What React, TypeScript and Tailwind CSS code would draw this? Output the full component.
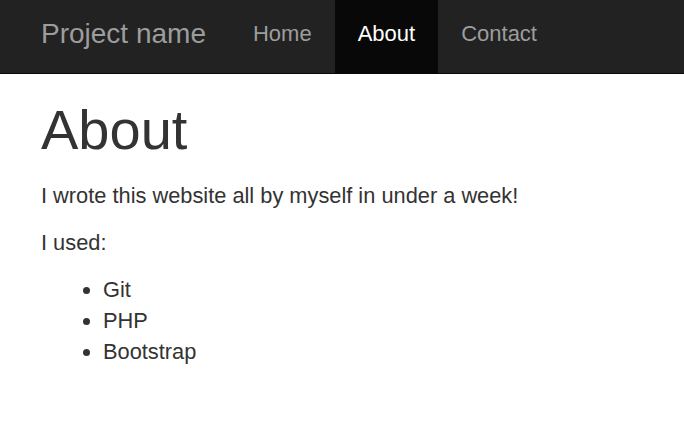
export default function App() {
  const tools = ["Git", "PHP", "Bootstrap"];
  return (
    <div className="min-h-screen bg-white text-[#333]" style={{ fontFamily: '"Liberation Sans", Arial, sans-serif' }}>
      <nav className="h-[74px] border-b border-[#080808] bg-[#222]">
        <div className="flex h-[73px] items-stretch pl-[20px]">
          <a className="flex items-center pl-[21px] pr-[24px] pb-[6px] text-[28px] text-[#9d9d9d]">Project name</a>
          <ul className="flex">
            <li className="flex items-center px-[23px] pb-[6px] text-[22px] text-[#9d9d9d]">Home</li>
            <li className="flex items-center bg-[#080808] px-[23px] pb-[6px] text-[22px] text-white">About</li>
            <li className="flex items-center px-[23px] pb-[6px] text-[22px] text-[#9d9d9d]">Contact</li>
          </ul>
        </div>
      </nav>
      <main className="px-[41px]">
        <h1 className="mt-[25px] mb-[19px] text-[56px] leading-[1.1]">About</h1>
        <p className="mb-[16px] text-[21.8px] leading-[31px]">I wrote this website all by myself in under a week!</p>
        <p className="mb-[16px] text-[21.8px] leading-[31px]">I used:</p>
        <ul className="list-disc pl-[62px] text-[21.8px] leading-[31px]">
          {tools.map((t) => (
            <li key={t}>{t}</li>
          ))}
        </ul>
      </main>
    </div>
  );
}
